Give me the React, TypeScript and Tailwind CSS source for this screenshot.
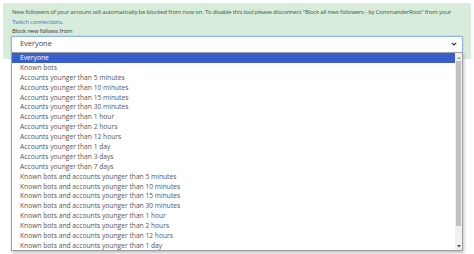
const options = [
  'Everyone',
  'Known bots',
  'Accounts younger than 5 minutes',
  'Accounts younger than 10 minutes',
  'Accounts younger than 15 minutes',
  'Accounts younger than 30 minutes',
  'Accounts younger than 1 hour',
  'Accounts younger than 2 hours',
  'Accounts younger than 12 hours',
  'Accounts younger than 1 day',
  'Accounts younger than 3 days',
  'Accounts younger than 7 days',
  'Known bots and accounts younger than 5 minutes',
  'Known bots and accounts younger than 10 minutes',
  'Known bots and accounts younger than 15 minutes',
  'Known bots and accounts younger than 30 minutes',
  'Known bots and accounts younger than 1 hour',
  'Known bots and accounts younger than 2 hours',
  'Known bots and accounts younger than 12 hours',
  'Known bots and accounts younger than 1 day',
];

export default function App() {
  return (
    <div className="w-[474px] h-[254px] bg-white relative overflow-hidden font-['Open_Sans',sans-serif]">
      <div className="mx-[3px] mt-[3px] bg-[#d8ecdb] rounded-[2px] pl-[9px] pr-[6px] pt-[5px] pb-[6px] text-[6px] tracking-[-0.2px] leading-[9.5px] text-[#3c5a44]">
        <p className="whitespace-nowrap">
          New followers of your account will automatically be blocked from now on. To disable this tool please disconnect "Block all new followers - by CommanderRoot" from your
        </p>
        <p className="text-[#3b6fd8]">Twitch connections.</p>
        <p className="text-[#333]">Block new follows from</p>
        <div className="relative -mt-[1px] ml-[-1px] w-[452px] h-[17px] bg-white border border-[#8fb3e8] rounded-[2px] flex items-center justify-between pl-[8px] pr-[5px] shadow-[0_0_0_1px_rgba(130,170,230,0.25)] tracking-normal">
          <span className="text-[7.4px] text-[#444]">Everyone</span>
          <svg width="6" height="4" viewBox="0 0 6 4">
            <path d="M0.8 0.8 L3 3 L5.2 0.8" fill="none" stroke="#333" strokeWidth="1.2" />
          </svg>
        </div>
      </div>

      <div className="absolute left-[11px] top-[52px] w-[452px] h-[199px] bg-white border border-[#a0a0a0] shadow-[1px_2px_3px_rgba(0,0,0,0.25)] flex">
        <div className="flex-1">
          {options.map((o, i) => (
            <div
              key={o}
              className={
                i === 0
                  ? 'h-[9.9px] leading-[9.9px] pl-[8px] text-[6.7px] bg-[#3a5fcd] text-white'
                  : 'h-[9.9px] leading-[9.9px] pl-[8px] text-[6.7px] text-[#555]'
              }
            >
              {o}
            </div>
          ))}
        </div>
        <div className="w-[7px] bg-[#f0f0f0] flex flex-col">
          <div className="h-[8px] flex items-center justify-center">
            <svg width="4" height="3" viewBox="0 0 4 3">
              <path d="M0 3 L2 0.5 L4 3 Z" fill="#a3a3a3" />
            </svg>
          </div>
          <div className="h-[165px] mx-[1px] bg-[#c1c1c1]" />
          <div className="flex-1" />
          <div className="h-[8px] flex items-center justify-center">
            <svg width="4" height="3" viewBox="0 0 4 3">
              <path d="M0 0 L4 0 L2 2.5 Z" fill="#505050" />
            </svg>
          </div>
        </div>
      </div>
    </div>
  );
}
